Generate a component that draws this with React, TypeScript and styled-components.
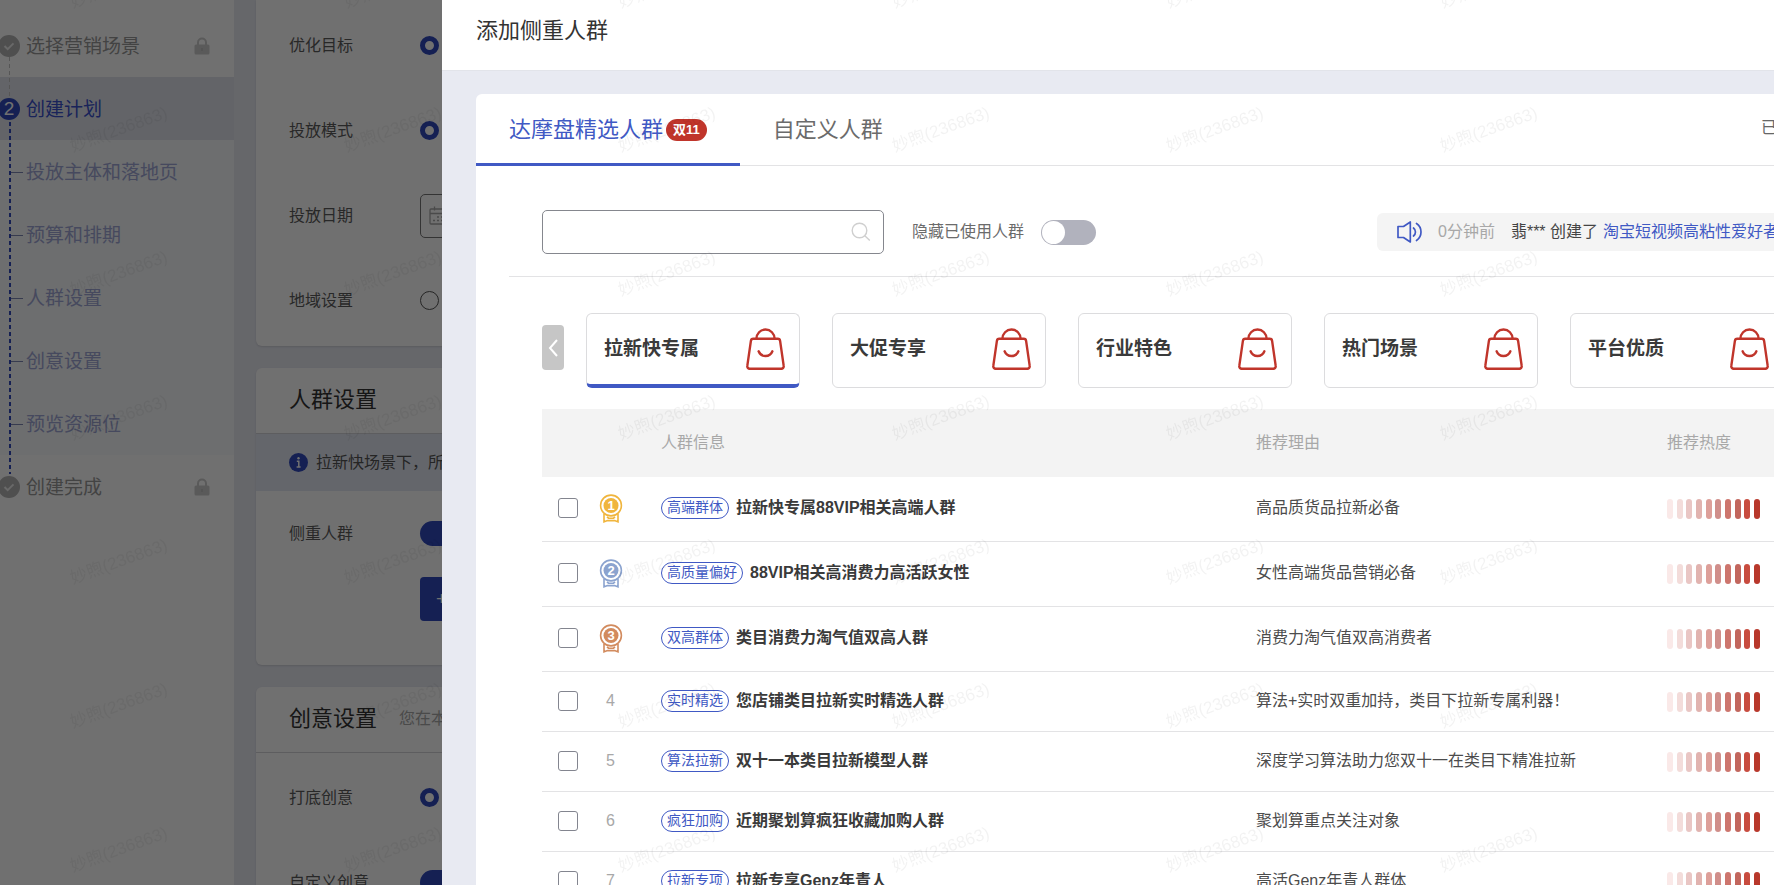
import React from "react";
import styled, { createGlobalStyle, css } from "styled-components";

const color = {
  primary: "#4059c4",
  primaryDeep: "#304abe",
  danger: "#c0352b",
  canvas: "#e8eaf2",
  line: "#e3e3e5",
  text: "#333",
  muted: "#a8a8a8",
};

const GlobalStyle = createGlobalStyle`
  *, *::before, *::after { box-sizing: border-box; }
  body {
    margin: 0;
    background: ${color.canvas};
    font-family: "Liberation Sans", "Noto Sans CJK SC", sans-serif;
    font-size: 16px;
    line-height: 24px;
    color: ${color.text};
  }
  button, input { font: inherit; color: inherit; }
  h1, h2, ul, ol { margin: 0; padding: 0; }
  ul, ol { list-style: none; }
  svg { flex: none; }
`;

/* ---------- Page behind the drawer ---------- */

const Page = styled.div`
  display: flex;
  gap: 22px;
  height: 100vh;
  overflow: hidden;
`;

const Sidebar = styled.nav`
  flex: 0 0 234px;
  padding-top: 14px;
  background: #fff;
`;

const Steps = styled.ol`
  position: relative;
`;

const StepItem = styled.li<{ $active?: boolean }>`
  display: flex;
  align-items: center;
  gap: 6px;
  height: 63px;
  padding: 0 24px 0 0;
  font-size: 19px;
  color: ${(p) => (p.$active ? "#3a50cc" : "#989898")};
  background: ${(p) => (p.$active ? "#e1e4ec" : "#fff")};
`;

const StepDot = styled.span<{ $active?: boolean }>`
  display: flex;
  align-items: center;
  justify-content: center;
  width: 22px;
  height: 22px;
  margin-left: -2px;
  border-radius: 50%;
  color: #fff;
  background: ${(p) => (p.$active ? color.primaryDeep : "#b4b4b4")};
`;

const StepLabel = styled.span`
  flex: 1;
  padding-top: 2px;
`;

const SubSteps = styled.ul`
  background: #f7fafd;
`;

const SubStep = styled.li`
  display: flex;
  align-items: center;
  gap: 3px;
  height: 63px;
  padding: 2px 0 0 11px;

  &::before {
    content: "";
    width: 12px;
    height: 1px;
    background: #7e86b4;
  }

  a {
    font-size: 19px;
    color: #a0a7d6;
    text-decoration: none;
  }
`;

const StepTrack = styled.span<{ $done?: boolean }>`
  position: absolute;
  left: 9px;
  width: ${(p) => (p.$done ? "1px" : "2px")};
  top: ${(p) => (p.$done ? "43px" : "108px")};
  height: ${(p) => (p.$done ? "40px" : "352px")};
  background: repeating-linear-gradient(
    ${(p) => (p.$done ? "#c4c4c4" : color.primaryDeep)} 0 4px,
    transparent 4px 7px
  );
`;

const Main = styled.main`
  flex: 1;
  display: flex;
  flex-direction: column;
  gap: 22px;
`;

const Section = styled.section<{ $continued?: boolean }>`
  flex: none;
  padding: ${(p) => (p.$continued ? "3px 0" : "0")};
  border-radius: ${(p) => (p.$continued ? "0 0 6px 6px" : "6px")};
  background: #fff;
  box-shadow: 0 1px 2px rgba(0, 0, 0, 0.12);
`;

const SectionHead = styled.header`
  display: flex;
  align-items: center;
  gap: 22px;
  height: 66px;
  padding: 0 33px 2px;
  border-bottom: 1px solid #d4d4d8;

  h2 {
    font-size: 22px;
    font-weight: 400;
  }

  span {
    color: ${color.muted};
  }
`;

const SectionBody = styled.div`
  padding-top: 2px;
`;

const InfoBand = styled.p`
  display: flex;
  align-items: center;
  gap: 8px;
  height: 57px;
  margin: 0;
  padding: 0 33px;
  color: #555;
  background: #e4e8f3;
`;

const FormRow = styled.div`
  display: flex;
  align-items: center;
  height: 85px;
  padding-left: 33px;
`;

const RowLabel = styled.label`
  flex: 0 0 131px;
  color: #5c5c5c;
`;

const Radio = styled.input`
  appearance: none;
  width: 19px;
  height: 19px;
  margin: 0;
  border: 1px solid #555;
  border-radius: 50%;
  background: #fff;

  &:checked {
    border: 5px solid ${color.primaryDeep};
  }
`;

const DateButton = styled.button`
  display: flex;
  align-items: center;
  width: 240px;
  height: 44px;
  padding: 0 8px;
  border: 1px solid #777;
  border-radius: 5px;
  color: #a8a8a8;
  background: #fff;
`;

const Switch = styled.input`
  appearance: none;
  flex: none;
  display: flex;
  align-items: center;
  width: 55px;
  height: 25px;
  margin: 0;
  padding: 1px;
  border-radius: 13px;
  background: #b1b2bd;

  &::before {
    content: "";
    width: 23px;
    height: 23px;
    border-radius: 50%;
    background: #fff;
  }

  &:checked {
    justify-content: flex-end;
    background: ${color.primaryDeep};
  }
`;

const ActionRow = styled.div`
  padding: 1px 0 44px 164px;
`;

const PrimaryButton = styled.button`
  width: 160px;
  height: 44px;
  padding: 0 16px;
  border: 0;
  border-radius: 4px;
  font-size: 19px;
  text-align: left;
  color: #fff;
  background: ${color.primaryDeep};
`;

const Mask = styled.div`
  position: fixed;
  inset: 0;
  background: rgba(0, 0, 0, 0.56);
`;

/* ---------- Drawer ---------- */

const Drawer = styled.aside`
  position: fixed;
  inset: 0 0 0 442px;
  display: flex;
  flex-direction: column;
  overflow: hidden;
  background: ${color.canvas};
`;

const DrawerHead = styled.header`
  flex: none;
  display: flex;
  align-items: center;
  height: 71px;
  padding: 0 34px 8px;
  background: #fff;
  border-bottom: 1px solid #e2e4ea;

  h1 {
    font-size: 22px;
    font-weight: 400;
  }
`;

const Panel = styled.div`
  flex: 1;
  min-height: 0;
  margin: 23px 0 0 34px;
  border-top-left-radius: 6px;
  background: #fff;
  overflow: hidden;
`;

const Tabs = styled.div`
  display: flex;
  height: 72px;
  border-bottom: 1px solid ${color.line};
`;

const Tab = styled.button<{ $active?: boolean }>`
  display: flex;
  align-items: center;
  gap: 3px;
  height: 72px;
  padding: 2px 33px 0;
  border: 0;
  border-bottom: 3px solid transparent;
  background: none;
  font-size: 22px;
  color: #6b6b6b;
  ${(p) =>
    p.$active &&
    css`
      color: ${color.primary};
      border-color: ${color.primary};
    `}
`;

const Badge = styled.span`
  height: 22px;
  padding: 0 7px;
  border-radius: 11px;
  font-size: 13px;
  line-height: 22px;
  font-weight: 700;
  color: #fff;
  background: ${color.danger};
`;

const TabsExtra = styled.span`
  width: 13px;
  margin-left: auto;
  overflow: hidden;
  line-height: 68px;
  color: #666;
`;

const Toolbar = styled.div`
  display: flex;
  align-items: center;
  margin-left: 33px;
  padding: 44px 0 22px 33px;
  border-bottom: 1px solid ${color.line};
`;

const SearchBox = styled.div`
  flex: 0 0 342px;
  display: flex;
  align-items: center;
  height: 44px;
  padding: 0 12px;
  border: 1px solid #85878e;
  border-radius: 5px;
  color: #cfcfcf;

  input {
    flex: 1;
    border: 0;
    outline: 0;
    background: none;
  }
`;

const HideUsed = styled.label`
  display: flex;
  align-items: center;
  gap: 17px;
  margin-left: 28px;
  color: #6b6b6b;
`;

const Notice = styled.div`
  display: flex;
  align-items: center;
  width: 397px;
  height: 38px;
  margin-left: auto;
  padding-left: 20px;
  border-radius: 6px 0 0 6px;
  overflow: hidden;
  white-space: nowrap;
  color: #444;
  background: #f4f4f4;

  time {
    margin: 0 16px 0 15px;
    color: ${color.muted};
  }

  a {
    margin-left: 5px;
    color: ${color.primary};
    text-decoration: none;
  }
`;

const Categories = styled.div`
  display: flex;
  align-items: flex-start;
  gap: 22px;
  padding: 36px 0 21px 66px;
`;

const PrevButton = styled.button`
  flex: 0 0 22px;
  display: flex;
  align-items: center;
  justify-content: center;
  height: 45px;
  margin-top: 12px;
  padding: 0;
  border: 0;
  border-radius: 4px;
  color: #fff;
  background: #c6c6c6;
`;

const CategoryTrack = styled.div`
  display: flex;
  gap: 32px;
  overflow: hidden;
`;

const Category = styled.button<{ $active?: boolean }>`
  flex: 0 0 214px;
  display: flex;
  align-items: center;
  justify-content: space-between;
  height: 75px;
  padding: 0 14px 3px 17px;
  border: 1px solid #dcdcde;
  border-radius: 6px;
  background: #fff;
  font-size: 19px;
  font-weight: 600;
  color: #3a3a3a;
  ${(p) =>
    p.$active &&
    css`
      padding-bottom: 0;
      border-bottom: 4px solid ${color.primary};
    `}

  svg {
    color: ${color.danger};
  }
`;

const TableWrap = styled.div`
  padding-left: 66px;
`;

const Table = styled.table`
  width: 100%;
  table-layout: fixed;
  border-collapse: separate;
  border-spacing: 0;
  white-space: nowrap;

  th,
  td {
    padding: 0;
    text-align: left;
    vertical-align: middle;
  }

  th {
    height: 68px;
    font-weight: 400;
    color: ${color.muted};
    background: #f3f3f3;
  }

  td {
    padding-bottom: 2px;
    border-bottom: 1px solid ${color.line};
  }
`;

const Row = styled.tr<{ $medal: boolean }>`
  height: ${(p) => (p.$medal ? "65px" : "60px")};
`;

const Col = styled.col<{ $width?: number }>`
  width: ${(p) => (p.$width ? `${p.$width}px` : "auto")};
`;

const CheckCell = styled.td`
  && {
    padding-left: 16px;
  }
`;

const Checkbox = styled.input`
  appearance: none;
  display: block;
  width: 20px;
  height: 20px;
  margin: 0;
  border: 1px solid #83858f;
  border-radius: 3px;
  background: #fff;
`;

const RankCell = styled.td`
  && {
    text-align: center;
    color: ${color.muted};
  }

  svg {
    display: block;
    margin: 0 auto;
  }
`;

const InfoHead = styled.th`
  && {
    padding-left: 28px;
  }
`;

const InfoCell = styled.td`
  && {
    padding-left: 28px;
  }
`;

const Info = styled.div`
  display: flex;
  align-items: center;
  gap: 7px;
`;

const Tag = styled.span`
  height: 22px;
  padding: 0 5px;
  border: 1px solid ${color.primary};
  border-radius: 11px;
  font-size: 14px;
  line-height: 19px;
  color: ${color.primary};
`;

const AudienceName = styled.span`
  font-weight: 600;
  color: #3a3a3a;
`;

const ReasonCell = styled.td`
  color: #4c4c4c;
`;

const HeatCell = styled.td`
  && {
    padding-bottom: 0;
  }
`;

const Heat = styled.div`
  display: flex;
  justify-content: space-between;
  width: 93px;
`;

const HeatBar = styled.span<{ $tone: string }>`
  width: 6px;
  height: 20px;
  border-radius: 3px;
  background: ${(p) => p.$tone};
`;

/* ---------- Watermark ---------- */

const Watermark = styled.div`
  position: fixed;
  inset: -86px 0 0 -18px;
  display: grid;
  grid-template-columns: repeat(auto-fill, 274px);
  grid-auto-rows: 144px;
  overflow: hidden;
  pointer-events: none;
  user-select: none;

  span {
    place-self: center;
    transform: rotate(-20deg);
    font-size: 17px;
    color: rgba(0, 0, 0, 0.05);
  }
`;

/* ---------- Icons ---------- */

const CheckIcon = () => (
  <svg width="22" height="22" viewBox="0 0 22 22" fill="none" stroke="#eee" strokeWidth="2">
    <path d="M6.5 11l3.2 3.2 5.8-5.8" />
  </svg>
);

const LockIcon = () => (
  <svg width="16" height="18" viewBox="0 0 16 18" fill="none">
    <path d="M4 8V5.5a4 4 0 0 1 8 0V8" stroke="#cdcdcd" strokeWidth="2" />
    <rect x="0.5" y="7.5" width="15" height="10" rx="1.5" fill="#cdcdcd" />
    <path d="M8 11v3" stroke="#bbb" strokeWidth="1.4" />
  </svg>
);

const InfoIcon = () => (
  <svg width="19" height="19" viewBox="0 0 19 19">
    <circle cx="9.5" cy="9.5" r="9.5" fill={color.primaryDeep} />
    <circle cx="9.5" cy="5.2" r="1.2" fill="#fff" />
    <path d="M7.8 8.2h2v5.6M7.6 14h4" stroke="#fff" strokeWidth="1.5" fill="none" />
  </svg>
);

const CalendarIcon = () => (
  <svg width="20" height="19" viewBox="0 0 20 19" fill="none" stroke="currentColor" strokeWidth="1.3">
    <rect x="1" y="3" width="18" height="15" rx="1" />
    <path d="M1 7.5h18M5.5 0.5v4M14.5 0.5v4M4 14.5h2M8 14.5h2M12 14.5h2M8 11h2M12 11h2" />
  </svg>
);

const SearchIcon = () => (
  <svg width="20" height="20" viewBox="0 0 20 20" fill="none" stroke="currentColor" strokeWidth="1.4">
    <circle cx="8.5" cy="8.5" r="7.3" />
    <path d="M13.8 13.8l5 4.6" />
  </svg>
);

const SpeakerIcon = () => (
  <svg width="26" height="24" viewBox="0 0 26 24" fill="none" stroke={color.primary} strokeWidth="1.7">
    <path d="M1 6.5h5.5L13.3 2v20L6.5 17.5H1z" strokeLinejoin="round" />
    <path d="M16.5 8c2.6 2 2.6 6 0 8M19.5 3.500c6 4 6 13 0 17" strokeLinecap="round" />
  </svg>
);

const ChevronLeft = () => (
  <svg width="10" height="18" viewBox="0 0 10 18" fill="none" stroke="currentColor" strokeWidth="2">
    <path d="M9 1L2 9l7 8" />
  </svg>
);

const BagIcon = () => (
  <svg width="39" height="42" viewBox="0 0 39 42" fill="none" stroke="currentColor" strokeWidth="2.4">
    <path d="M7.3 10.8h24.4a2.4 2.4 0 0 1 2.4 2.1l3.6 25a2.4 2.4 0 0 1-2.4 2.8H3.7a2.4 2.4 0 0 1-2.4-2.8l3.6-25a2.4 2.4 0 0 1 2.4-2.1z" />
    <path d="M10.4 10.8a9.1 9.3 0 0 1 18.2 0" />
    <path d="M12.6 23.3a7.4 7.4 0 0 0 13.8 0" strokeLinecap="round" />
  </svg>
);

const medalColors = ["#f0b53d", "#8ba3cf", "#d28b5e"];

const MedalIcon = ({ rank }: { rank: number }) => {
  const tone = medalColors[rank - 1];
  return (
    <svg width="24" height="29" viewBox="0 0 24 29" fill="none" stroke={tone} strokeWidth="1.6">
      <path d="M5 20v7.8l3.5-1.2h7l3.5 1.2V20" />
      <path d="M8 22.8l1.5 1.4h5l1.5-1.4" />
      <circle cx="12" cy="11.5" r="10.4" fill="#fff" />
      <circle cx="12" cy="11.5" r="7.5" fill={tone} stroke="none" />
      <text x="12" y="16" fill="#fff" stroke="none" fontSize="13" fontWeight="700" textAnchor="middle">
        {rank}
      </text>
    </svg>
  );
};

/* ---------- Data ---------- */

const subSteps = ["投放主体和落地页", "预算和排期", "人群设置", "创意设置", "预览资源位"];

const categories = ["拉新快专属", "大促专享", "行业特色", "热门场景", "平台优质"];

const audiences = [
  { tag: "高端群体", name: "拉新快专属88VIP相关高端人群", reason: "高品质货品拉新必备" },
  { tag: "高质量偏好", name: "88VIP相关高消费力高活跃女性", reason: "女性高端货品营销必备" },
  { tag: "双高群体", name: "类目消费力淘气值双高人群", reason: "消费力淘气值双高消费者" },
  { tag: "实时精选", name: "您店铺类目拉新实时精选人群", reason: "算法+实时双重加持，类目下拉新专属利器！" },
  { tag: "算法拉新", name: "双十一本类目拉新模型人群", reason: "深度学习算法助力您双十一在类目下精准拉新" },
  { tag: "疯狂加购", name: "近期聚划算疯狂收藏加购人群", reason: "聚划算重点关注对象" },
  { tag: "拉新专项", name: "拉新专享Genz年青人", reason: "高活Genz年青人群体" },
];

const heatTones = [
  "#fae9e8", "#f3dcda", "#e9c6c4", "#e1b3af", "#dd9f99",
  "#d08e8a", "#cd756d", "#c2665d", "#c84c3f", "#b8382b",
];

const watermarkCells = Array.from({ length: 49 }, (_, i) => i);

export default function App() {
  return (
    <>
      <GlobalStyle />
      <Page>
        <Sidebar>
          <Steps>
            <StepItem>
              <StepDot><CheckIcon /></StepDot>
              <StepLabel>选择营销场景</StepLabel>
              <LockIcon />
            </StepItem>
            <StepItem $active>
              <StepDot $active>2</StepDot>
              <StepLabel>创建计划</StepLabel>
            </StepItem>
            <li>
              <SubSteps>
                {subSteps.map((s) => (
                  <SubStep key={s}><a href="#">{s}</a></SubStep>
                ))}
              </SubSteps>
            </li>
            <StepItem>
              <StepDot><CheckIcon /></StepDot>
              <StepLabel>创建完成</StepLabel>
              <LockIcon />
            </StepItem>
            <StepTrack as="li" $done aria-hidden />
            <StepTrack as="li" aria-hidden />
          </Steps>
        </Sidebar>
        <Main>
          <Section $continued>
            <FormRow>
              <RowLabel htmlFor="goal">优化目标</RowLabel>
              <Radio id="goal" type="radio" name="goal" defaultChecked />
            </FormRow>
            <FormRow>
              <RowLabel htmlFor="mode">投放模式</RowLabel>
              <Radio id="mode" type="radio" name="mode" defaultChecked />
            </FormRow>
            <FormRow>
              <RowLabel htmlFor="date">投放日期</RowLabel>
              <DateButton id="date" type="button"><CalendarIcon /></DateButton>
            </FormRow>
            <FormRow>
              <RowLabel htmlFor="region">地域设置</RowLabel>
              <Radio id="region" type="radio" name="region" />
            </FormRow>
          </Section>
          <Section>
            <SectionHead><h2>人群设置</h2></SectionHead>
            <InfoBand><InfoIcon />拉新快场景下，所</InfoBand>
            <FormRow>
              <RowLabel htmlFor="focus">侧重人群</RowLabel>
              <Switch id="focus" type="checkbox" role="switch" defaultChecked />
            </FormRow>
            <ActionRow>
              <PrimaryButton type="button">+</PrimaryButton>
            </ActionRow>
          </Section>
          <Section>
            <SectionHead>
              <h2>创意设置</h2>
              <span>您在本</span>
            </SectionHead>
            <SectionBody>
              <FormRow>
                <RowLabel htmlFor="base">打底创意</RowLabel>
                <Radio id="base" type="radio" name="base" defaultChecked />
              </FormRow>
              <FormRow>
                <RowLabel htmlFor="custom">自定义创意</RowLabel>
                <Switch id="custom" type="checkbox" role="switch" defaultChecked />
              </FormRow>
            </SectionBody>
          </Section>
        </Main>
      </Page>

      <Mask />

      <Drawer>
        <DrawerHead><h1>添加侧重人群</h1></DrawerHead>
        <Panel>
          <Tabs role="tablist">
            <Tab type="button" role="tab" aria-selected $active>
              达摩盘精选人群<Badge>双11</Badge>
            </Tab>
            <Tab type="button" role="tab" aria-selected={false}>自定义人群</Tab>
            <TabsExtra>已</TabsExtra>
          </Tabs>
          <Toolbar>
            <SearchBox>
              <input type="search" aria-labelledby="audience-head" />
              <SearchIcon />
            </SearchBox>
            <HideUsed>
              隐藏已使用人群
              <Switch type="checkbox" role="switch" />
            </HideUsed>
            <Notice>
              <SpeakerIcon />
              <time>0分钟前</time>
              翡*** 创建了
              <a href="#">淘宝短视频高粘性爱好者</a>
            </Notice>
          </Toolbar>
          <Categories>
            <PrevButton type="button"><ChevronLeft /></PrevButton>
            <CategoryTrack>
              {categories.map((c, i) => (
                <Category key={c} type="button" $active={i === 0}>
                  {c}
                  <BagIcon />
                </Category>
              ))}
            </CategoryTrack>
          </Categories>
          <TableWrap>
            <Table>
              <colgroup>
                <Col $width={46} />
                <Col $width={45} />
                <Col />
                <Col $width={411} />
                <Col $width={107} />
              </colgroup>
              <thead>
                <tr>
                  <th />
                  <th />
                  <InfoHead id="audience-head">人群信息</InfoHead>
                  <th>推荐理由</th>
                  <th>推荐热度</th>
                </tr>
              </thead>
              <tbody>
                {audiences.map((a, i) => (
                  <Row key={a.name} $medal={i < 3}>
                    <CheckCell>
                      <Checkbox type="checkbox" aria-labelledby={`audience-${i}`} />
                    </CheckCell>
                    <RankCell>{i < 3 ? <MedalIcon rank={i + 1} /> : i + 1}</RankCell>
                    <InfoCell>
                      <Info>
                        <Tag>{a.tag}</Tag>
                        <AudienceName id={`audience-${i}`}>{a.name}</AudienceName>
                      </Info>
                    </InfoCell>
                    <ReasonCell>{a.reason}</ReasonCell>
                    <HeatCell>
                      <Heat>
                        {heatTones.map((t) => (
                          <HeatBar key={t} $tone={t} />
                        ))}
                      </Heat>
                    </HeatCell>
                  </Row>
                ))}
              </tbody>
            </Table>
          </TableWrap>
        </Panel>
      </Drawer>

      <Watermark aria-hidden>
        {watermarkCells.map((i) => (
          <span key={i}>妙煦(236863)</span>
        ))}
      </Watermark>
    </>
  );
}
